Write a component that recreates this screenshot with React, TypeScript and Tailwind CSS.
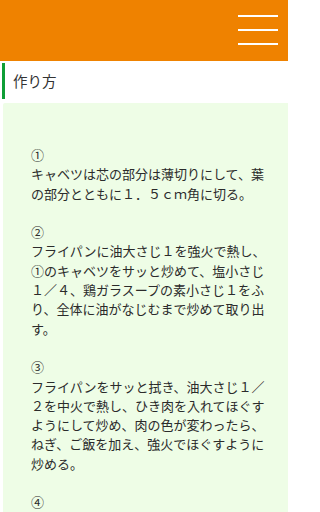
import React from 'react';

const steps: string[] = [
    'キャベツは芯の部分は薄切りにして、葉の部分とともに１．５ｃｍ角に切る。',
    'フライパンに油大さじ１を強火で熱し、①のキャベツをサッと炒めて、塩小さじ１／４、鶏ガラスープの素小さじ１をふり、全体に油がなじむまで炒めて取り出す。',
    'フライパンをサッと拭き、油大さじ１／２を中火で熱し、ひき肉を入れてほぐすようにして炒め、肉の色が変わったら、ねぎ、ご飯を加え、強火でほぐすように炒める。',
    'ご飯がパラパラになったら、①のキャベツを戻し入れ、しょうゆで味を調える。',
];

const marks = ['①', '②', '③', '④'];

const App: React.FC = () => {
    return (
        <div
            className="w-[288px] h-[512px] overflow-hidden bg-white text-[#333]"
            style={{ fontFamily: '"Noto Sans CJK JP", "Noto Sans", sans-serif' }}
        >
            {/* Header */}
            <header className="h-[61px] bg-[#ef8200] flex justify-end">
                <button className="w-[40px] mr-[10px] pt-[15px] flex flex-col gap-[12px]">
                    <span className="block h-[2px] bg-white"></span>
                    <span className="block h-[2px] bg-white"></span>
                    <span className="block h-[2px] bg-white"></span>
                </button>
            </header>

            {/* Section title */}
            <div className="pt-[2px] pb-[4px]">
                <h2 className="ml-[2px] border-l-[3px] border-[#0f9e36] h-[36px] pl-[8px] flex items-center text-[14.5px] text-[#333]">
                    作り方
                </h2>
            </div>

            {/* Steps */}
            <div className="ml-[3px] bg-[#eefde6] rounded-tl-[2px] pt-[42px] pl-[28px] pr-[16px] pb-[20px]">
                {steps.map((s, i) => (
                    <p key={i} className="text-[13px] leading-[19.3px] mb-[19.3px] text-[#2b2b2b]">
                        {marks[i]}
                        <br />
                        {s}
                    </p>
                ))}
            </div>
        </div>
    );
};

export default App;
